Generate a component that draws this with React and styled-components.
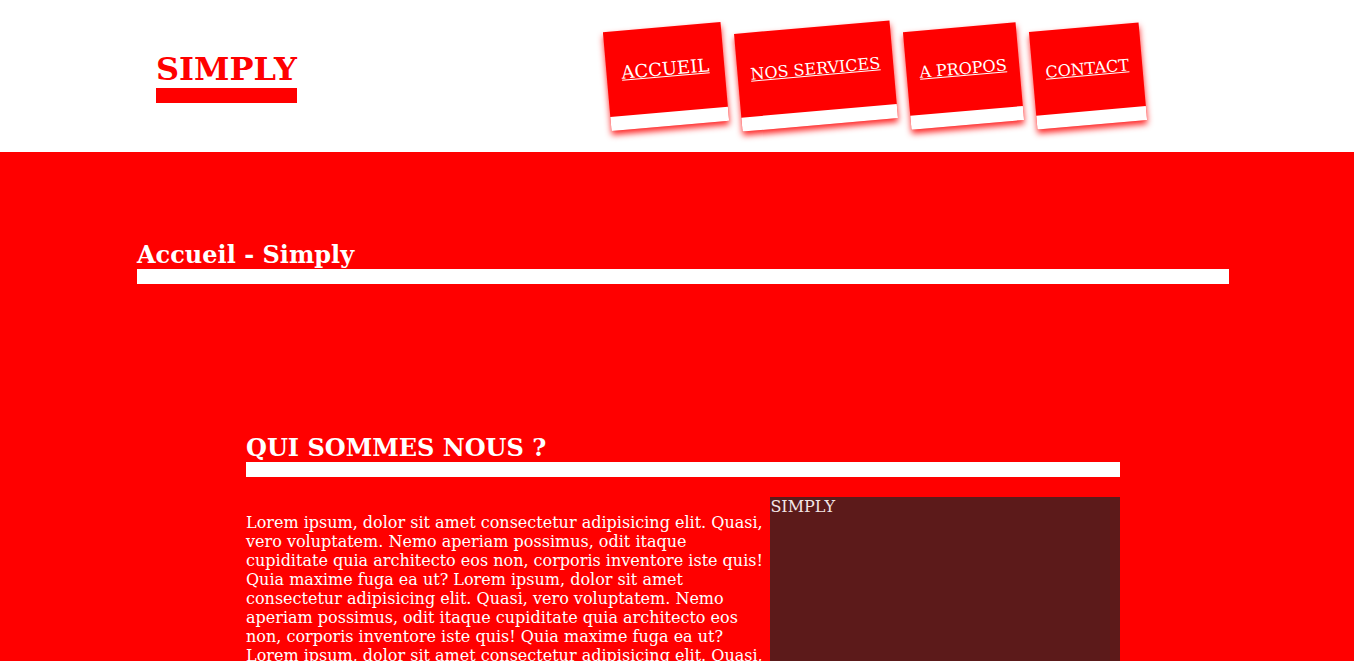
import React from 'react'
import styled, { createGlobalStyle } from 'styled-components'

const Global = createGlobalStyle`
body {
    margin: 0;
    font-family: "DejaVu Serif", serif;
    background: #ff0000;
}
`

const Header = styled.header`
display: flex;
align-items: center;
height: 152px;
padding-left: 156px;
background: white;
`

const Logo = styled.h1`
margin: 2px 0 0;
display: inline-block;
font-size: 32px;
color: #ff0000;
border-bottom: 15px solid #ff0000;
line-height: 37px;
`

const Nav = styled.ul`
display: flex;
align-items: center;
gap: 13px;
margin: 0 0 0 310px;
padding: 0;
list-style: none;
`

const NavItem = styled.li`
background: #ff0000;
padding: 32px ${props => props.active ? '15px' : '13px'} 33px;
border-bottom: 14px solid white;
transform: rotate(-5deg);
box-shadow: 0 4px 6px rgba(255, 0, 0, 0.85);
`

const NavLink = styled.a`
color: white;
font-size: ${props => props.active ? '18px' : '16px'};
line-height: 19px;
text-decoration: underline;
white-space: nowrap;
`

const Hero = styled.section`
padding: 89px 0 0 137px;
`

const Title = styled.h2`
margin: 0;
width: ${props => props.width}px;
font-size: 24px;
line-height: 28px;
color: white;
border-bottom: 15px solid white;
`

const About = styled.section`
padding: 150px 0 0 246px;
`

const Row = styled.div`
display: flex;
width: 874px;
margin-top: 20px;
`

const Text = styled.p`
flex: 0 0 60%;
margin: 16px 0 0;
color: white;
font-size: 16px;
line-height: 19px;
`

const Aside = styled.div`
flex: 0 0 40%;
min-height: 300px;
background: #5c1a1a;
color: #f3e6e6;
font-size: 16px;
line-height: 19px;
`

const lorem = 'Lorem ipsum, dolor sit amet consectetur adipisicing elit. Quasi, vero voluptatem. Nemo aperiam possimus, odit itaque cupiditate quia architecto eos non, corporis inventore iste quis! Quia maxime fuga ea ut? '

const links = ['ACCUEIL', 'NOS SERVICES', 'A PROPOS', 'CONTACT']

function App() {
    return (
        <>
            <Global />
            <Header>
                <Logo>SIMPLY</Logo>
                <Nav>
                    {links.map(l => (
                        <NavItem key={l} active={l === 'ACCUEIL'}>
                            <NavLink href="#" active={l === 'ACCUEIL'}>{l}</NavLink>
                        </NavItem>
                    ))}
                </Nav>
            </Header>
            <Hero>
                <Title width={1092}>Accueil - Simply</Title>
            </Hero>
            <About>
                <Title width={874}>QUI SOMMES NOUS ?</Title>
                <Row>
                    <Text>{lorem + lorem + lorem + lorem}</Text>
                    <Aside>SIMPLY</Aside>
                </Row>
            </About>
        </>
    );
}

export default App;
